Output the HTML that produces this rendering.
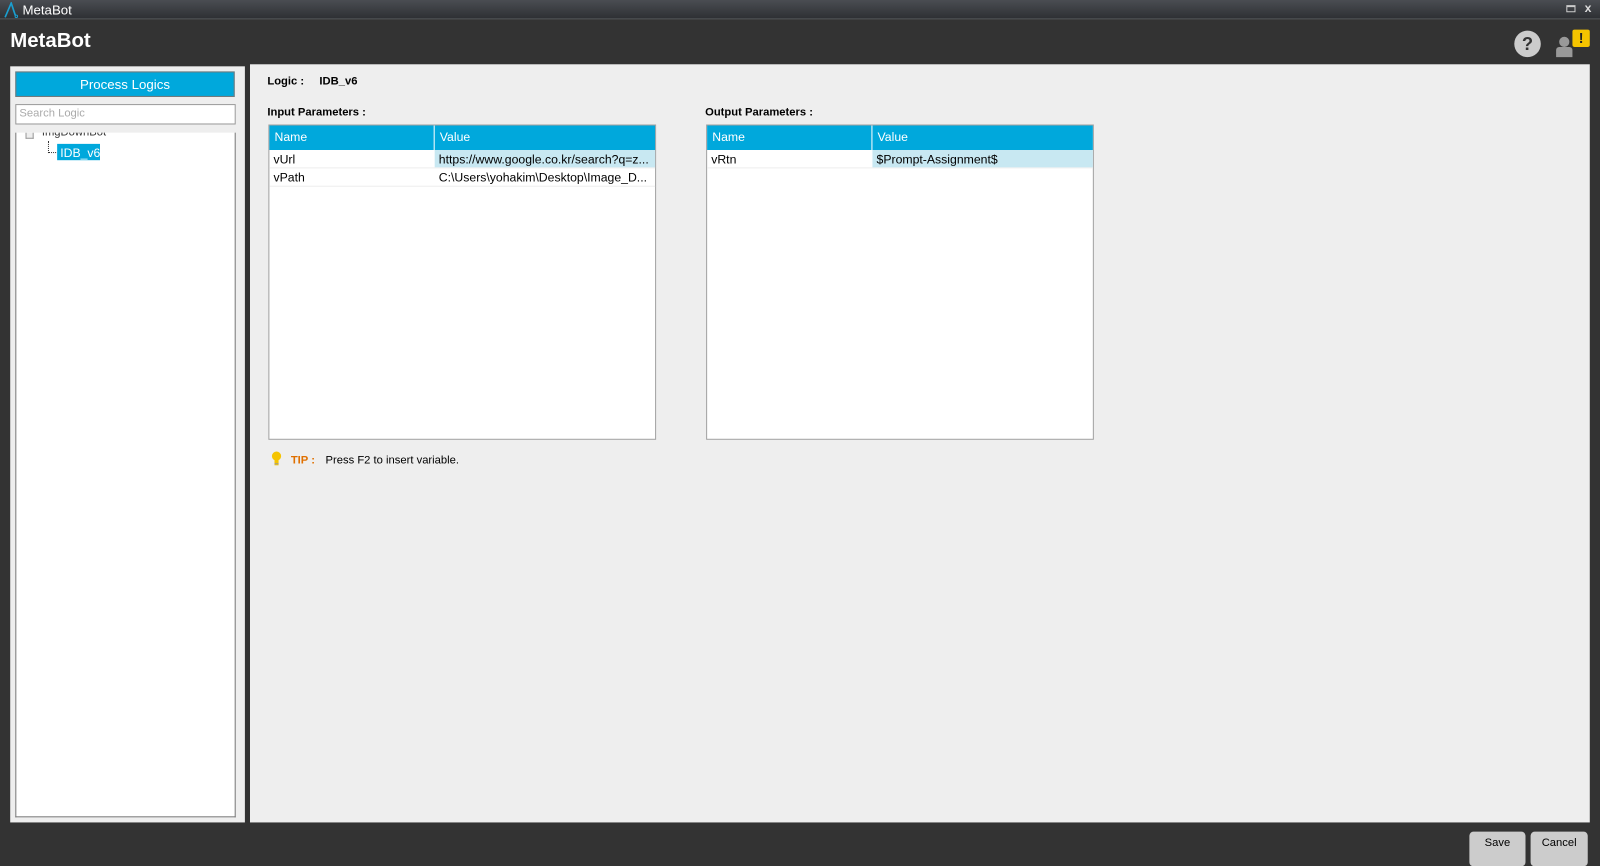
<!DOCTYPE html>
<html><head><style>
*{margin:0;padding:0;box-sizing:border-box}
body{width:1600px;height:849px;background:#333;font-family:"Liberation Sans",sans-serif;overflow:hidden;font-size:12px;color:#000}
#w{position:absolute;left:0;top:0;width:1568px;height:832px;transform:scale(1.0204);transform-origin:0 0}
.abs{position:absolute}
.tb{left:0;top:0;width:1568px;height:19px;background:linear-gradient(#4a4d52,#2e3034);border-bottom:1px solid #55585c}
.tbl{background:#fff;border:1px solid #a0a0a0}
.hd{height:24px;background:#00a8dc;color:#fff;font-size:12px;display:flex}
.hd div{padding:4px 5px;height:24px;border-right:1px solid #fff}
.row{height:18px;display:flex;border-bottom:1px solid #eee;font-size:12px}
.row div{padding:2px 4px;white-space:nowrap;overflow:hidden}
</style></head><body><div id="w">
<div class="abs tb"></div>
<svg class="abs" style="left:3px;top:2px" width="16" height="16" viewBox="0 0 16 16"><path d="M2 15 L8 1 L12 13" fill="none" stroke="#1a9fd0" stroke-width="1.6"/><circle cx="13" cy="14" r="1.2" fill="none" stroke="#1a9fd0"/></svg>
<div class="abs" style="left:22px;top:2px;color:#fff;font-size:13px">MetaBot</div>
<div class="abs" style="left:1535px;top:5px;width:9px;height:7px;border:1px solid #ccc;border-top-width:2px"></div>
<div class="abs" style="left:1553px;top:1px;color:#ddd;font-size:12px;font-weight:bold">x</div>
<div class="abs" style="left:10px;top:29px;color:#fff;font-size:20px;font-weight:bold">MetaBot</div>
<div class="abs" style="left:1484px;top:30px;width:26px;height:26px;border-radius:50%;background:#ccc;color:#333;font-weight:bold;font-size:18px;text-align:center;line-height:26px">?</div>
<div class="abs" style="left:1528px;top:36px;width:10px;height:10px;border-radius:50%;background:#999"></div>
<div class="abs" style="left:1525px;top:46px;width:16px;height:10px;background:#999;border-radius:3px 3px 0 0"></div>
<div class="abs" style="left:1541px;top:29px;width:17px;height:17px;background:#f5c400;border-radius:2px;color:#222;font-weight:bold;text-align:center;font-size:14px;line-height:17px">!</div>
<div class="abs" style="left:10px;top:65px;width:230px;height:741px;background:#eee"></div>
<div class="abs" style="left:15px;top:70px;width:215px;height:25px;background:#00a8dc;border:1px solid #777;color:#fff;font-size:13px;text-align:center;line-height:23px">Process Logics</div>
<div class="abs" style="left:15px;top:102px;width:216px;height:20px;background:#fff;border:1px solid #999;color:#aaa;font-size:11px;padding:2px 3px">Search Logic</div>
<div class="abs" style="left:15px;top:130px;width:216px;height:671px;background:#fff;border:1px solid #777;border-top:none;overflow:hidden">
<div class="abs" style="left:9px;top:0;width:8px;height:6px;border:1px solid #999;border-top:none;background:#eee"></div>
<div class="abs" style="left:25px;top:-6px;font-size:11px;color:#333">ImgDownBot</div>
<div class="abs" style="left:31px;top:8px;height:12px;border-left:1px dotted #333"></div>
<div class="abs" style="left:31px;top:19px;width:8px;border-top:1px dotted #333"></div>
<div class="abs" style="left:40px;top:11px;width:42px;height:16px;background:#00a8dc;color:#fff;padding:2px 3px;font-size:12px">IDB_v6</div>
</div>
<div class="abs" style="left:245px;top:63px;width:1313px;height:743px;background:#eee"></div>
<div class="abs" style="left:262px;top:74px;font-size:11px;font-weight:bold">Logic :</div>
<div class="abs" style="left:313px;top:74px;font-size:11px;font-weight:bold">IDB_v6</div>
<div class="abs" style="left:262px;top:104px;font-size:11px;font-weight:bold">Input Parameters :</div>
<div class="abs" style="left:691px;top:104px;font-size:11px;font-weight:bold">Output Parameters :</div>
<div class="abs tbl" style="left:263px;top:122px;width:380px;height:309px">
<div class="hd"><div style="width:162px">Name</div><div style="flex:1;border:none">Value</div></div>
<div class="row"><div style="width:162px">vUrl</div><div style="flex:1;background:#c8e8f2">https://www.google.co.kr/search?q=z...</div></div>
<div class="row"><div style="width:162px">vPath</div><div style="flex:1">C:\Users\yohakim\Desktop\Image_D...</div></div>
</div>
<div class="abs tbl" style="left:692px;top:122px;width:380px;height:309px">
<div class="hd"><div style="width:162px">Name</div><div style="flex:1;border:none">Value</div></div>
<div class="row"><div style="width:162px">vRtn</div><div style="flex:1;background:#c8e8f2">$Prompt-Assignment$</div></div>
</div>
<svg class="abs" style="left:265px;top:442px" width="12" height="16" viewBox="0 0 12 16"><circle cx="6" cy="5" r="4.5" fill="#f5c400"/><rect x="4" y="9" width="4" height="5" fill="#f5c400"/><rect x="4" y="12" width="4" height="1" fill="#999"/></svg>
<div class="abs" style="left:285px;top:445px;font-size:11px;font-weight:bold;color:#e07000">TIP :</div>
<div class="abs" style="left:319px;top:445px;font-size:11px">Press F2 to insert variable.</div>
<div class="abs" style="left:1440px;top:815px;width:55px;height:34px;background:#ccc;border-radius:4px;text-align:center;padding-top:5px;font-size:11px">Save</div>
<div class="abs" style="left:1500px;top:815px;width:56px;height:34px;background:#ccc;border-radius:4px;text-align:center;padding-top:5px;font-size:11px">Cancel</div>
</div></body></html>
